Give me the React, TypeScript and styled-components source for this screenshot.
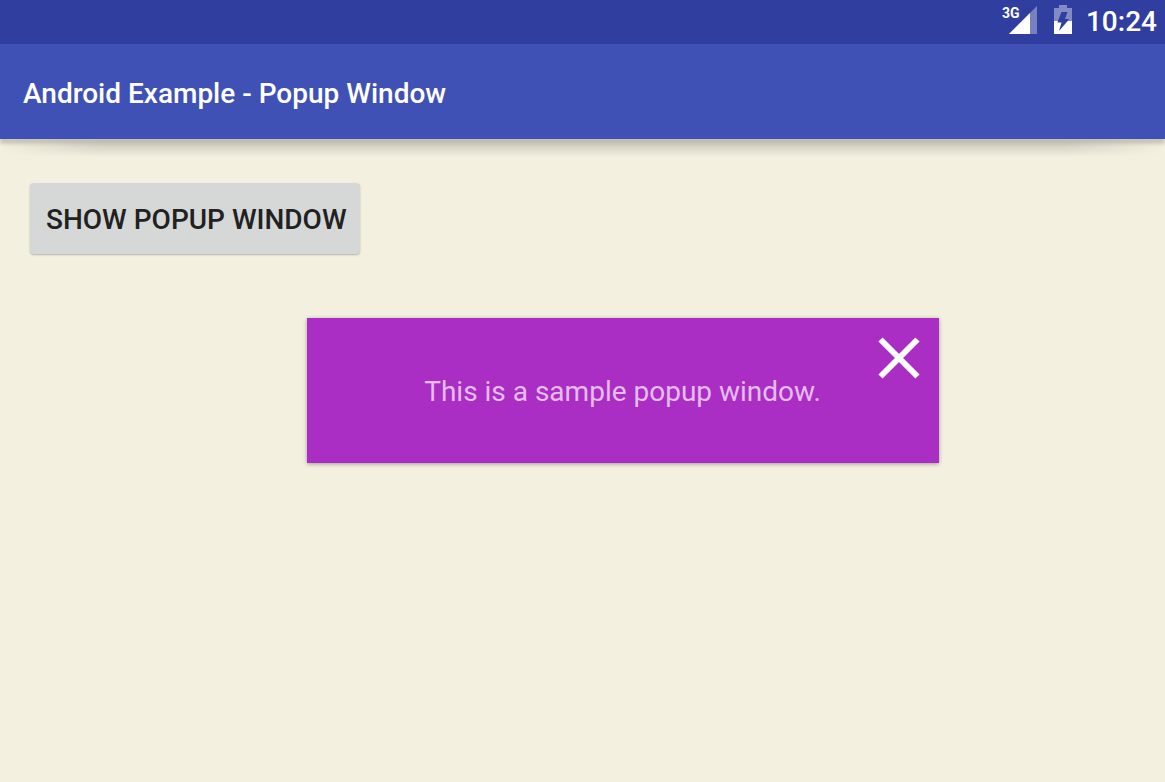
import React, { useState } from "react";
import styled, { createGlobalStyle } from "styled-components";

const GlobalStyle = createGlobalStyle`
  * { box-sizing: border-box; }
  body {
    margin: 0;
    background: #f4f0e0;
    font-family: Roboto, "Liberation Sans", sans-serif;
  }
`;

const Screen = styled.div`
  position: relative;
  min-height: 100vh;
  display: flex;
  flex-direction: column;
  overflow: hidden;
`;

const StatusBar = styled.div`
  height: 44px;
  padding: 0 8px;
  display: flex;
  align-items: center;
  justify-content: flex-end;
  background: #303e9f;
  color: #fff;
`;

const SignalIcon = styled.svg`
  margin-right: 16px;
`;

const BatteryIcon = styled.svg`
  margin-right: 13px;
`;

const Clock = styled.time`
  font-size: 28px;
  line-height: 32px;
  font-weight: 500;
`;

const AppBar = styled.header`
  position: relative;
  height: 95px;
  padding: 4px 23px 0;
  display: flex;
  align-items: center;
  background: #3f51b5;
  color: #fff;
  box-shadow: 0 5px 3px rgba(0, 0, 0, 0.16);

  &::after {
    content: "";
    position: absolute;
    left: 0;
    right: 0;
    top: 100%;
    height: 18px;
    background: linear-gradient(rgba(0, 0, 0, 0.03), rgba(0, 0, 0, 0.12) 40%, transparent);
    mask-image: linear-gradient(90deg, transparent, #000 100px, #000 calc(100% - 100px), transparent);
  }
`;

const Title = styled.h1`
  margin: 0;
  font-size: 28px;
  line-height: 32px;
  font-weight: 500;
`;

const Content = styled.main`
  flex: 1;
  padding: 44px 30px;
`;

const ShowButton = styled.button`
  height: 71px;
  padding: 2px 13px 0 16px;
  border: 0;
  border-radius: 4px;
  background: #d6d8d7;
  box-shadow: 0 1px 2px rgba(0, 0, 0, 0.25);
  color: #212121;
  font-family: inherit;
  font-size: 28px;
  line-height: 32px;
  font-weight: 500;
  text-transform: uppercase;
  cursor: pointer;
`;

const Popup = styled.div`
  position: absolute;
  top: 318px;
  left: calc(50% - 276px);
  width: 632px;
  height: 145px;
  padding-top: 2px;
  display: flex;
  align-items: center;
  justify-content: center;
  background: #aa2dc4;
  box-shadow: 0 1px 4px rgba(0, 0, 0, 0.35);
`;

const PopupText = styled.p`
  margin: 0;
  color: rgba(255, 255, 255, 0.7);
  font-size: 28px;
  line-height: 32px;
`;

const CloseButton = styled.button`
  position: absolute;
  top: 16px;
  right: 16px;
  width: 48px;
  height: 48px;
  padding: 0;
  border: 0;
  background: none;
  cursor: pointer;

  svg { display: block; }
`;

export default function App() {
  const [open, setOpen] = useState(true);

  return (
    <>
      <GlobalStyle />
      <Screen>
        <StatusBar>
          <SignalIcon width="36" height="40" viewBox="0 0 36 40" role="img" aria-label="3G signal">
            <text x="1" y="16" fill="#fff" fontFamily="Roboto, sans-serif" fontSize="14" fontWeight="700">3G</text>
            <path d="M8 32 36 4V32Z" fill="#fff" fillOpacity=".35" />
            <path d="M8 32 29 11V32Z" fill="#fff" />
          </SignalIcon>
          <BatteryIcon width="20" height="36" viewBox="0 0 20 36" role="img" aria-label="Battery charging">
            <path d="M6 1H14V4H19V17H14.700L16 15H12L14.500 8H8.500L5 17H1V4H6Z" fill="#fff" fillOpacity=".4" />
            <path d="M1 17H5L4.500 18.500H8.500L6 27L14.700 17H19V30H1Z" fill="#fff" />
          </BatteryIcon>
          <Clock>10:24</Clock>
        </StatusBar>
        <AppBar>
          <Title>Android Example - Popup Window</Title>
        </AppBar>
        <Content>
          <ShowButton type="button" onClick={() => setOpen(true)}>
            Show Popup Window
          </ShowButton>
        </Content>
        {open && (
          <Popup role="dialog" aria-label="Sample popup">
            <PopupText>This is a sample popup window.</PopupText>
            <CloseButton type="button" aria-label="Close" onClick={() => setOpen(false)}>
              <svg width="48" height="48" viewBox="0 0 48 48" aria-hidden="true">
                <path d="M5.500 5.500 42.500 42.500M42.500 5.500 5.500 42.500" stroke="#fff" strokeWidth="6" />
              </svg>
            </CloseButton>
          </Popup>
        )}
      </Screen>
    </>
  );
}
